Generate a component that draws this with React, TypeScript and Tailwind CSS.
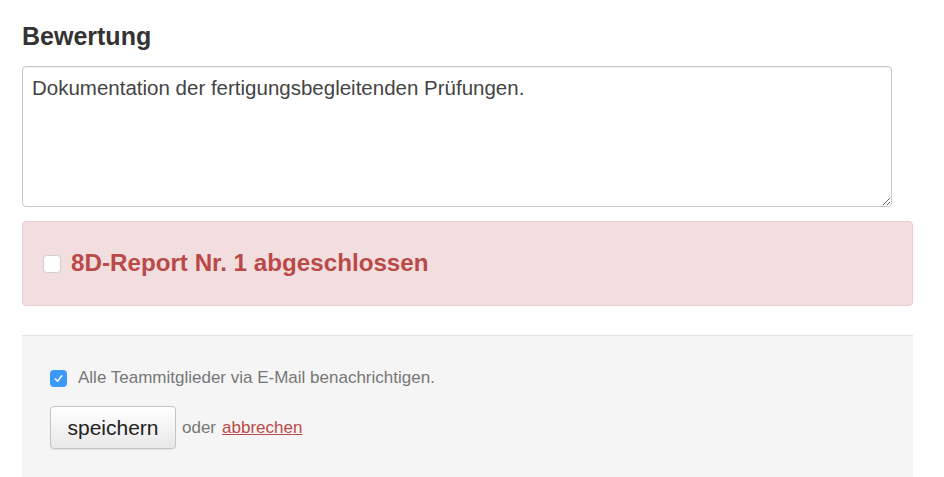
import React from 'react';

const App = () => {
  return (
    <div className="min-h-screen bg-white font-['Liberation_Sans',Arial,sans-serif] text-[#333]">
      <div className="pl-[22px] pr-[31px] pt-[20px]">
        <h2 className="text-[25px] font-bold leading-[32px] text-[#333]">Bewertung</h2>
        <div className="mt-[14px] w-[870px]">
          <textarea
            className="block h-[141px] w-full resize-y rounded-[4px] border border-[#c8c8c8] bg-white px-[9px] py-[8px] text-[20.5px] leading-[26px] text-[#444] shadow-[inset_0_1px_1px_rgba(0,0,0,0.06)] outline-none"
            defaultValue="Dokumentation der fertigungsbegleitenden Prüfungen."
          />
        </div>
        <div className="mt-[14px] flex h-[85px] items-center gap-[10px] rounded-[4px] border border-[#ebccd1] bg-[#f2dede] pl-[20px]">
          <span className="h-[18px] w-[18px] rounded-[4px] border border-[#cfcfcf] bg-white" />
          <span className="text-[24.2px] font-bold text-[#b94a48]">8D-Report Nr. 1 abgeschlossen</span>
        </div>
        <div className="mt-[29px] border-t border-[#e3e3e3] bg-[#f5f5f5] pb-[28px] pl-[28px] pt-[32px]">
          <label className="flex h-[20px] items-center gap-[11px] text-[17px] text-[#777]">
            <span className="flex h-[17px] w-[17px] items-center justify-center rounded-[4px] bg-[#3b99fc]">
              <svg viewBox="0 0 12 12" className="h-[11px] w-[11px]" fill="none" stroke="white" strokeWidth="1.6" strokeLinecap="round" strokeLinejoin="round">
                <path d="M2.5 6.5 L5 9 L9.5 3" />
              </svg>
            </span>
            Alle Teammitglieder via E-Mail benachrichtigen.
          </label>
          <div className="mt-[18px] flex items-center gap-[6px]">
            <button className="h-[43px] w-[126px] rounded-[4px] border border-[#c4c4c4] bg-gradient-to-b from-white to-[#e8e8e8] text-[21px] text-[#222] shadow-[0_1px_1px_rgba(0,0,0,0.08)]">
              speichern
            </button>
            <span className="text-[17px] text-[#777]">oder</span>
            <a href="#" className="text-[17px] text-[#b94a48] underline">abbrechen</a>
          </div>
        </div>
      </div>
    </div>
  );
};

export default App;
